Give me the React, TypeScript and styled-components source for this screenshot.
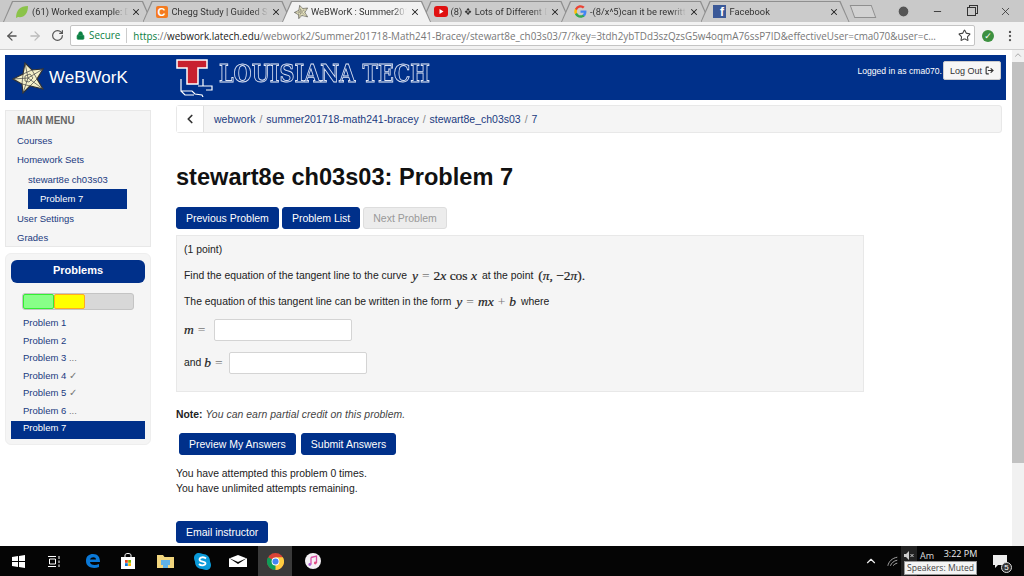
import styled, { createGlobalStyle } from 'styled-components';
import { ArrowLeft, ArrowRight, ChevronLeft, ChevronUp, EllipsisVertical, Lock, LogOut as LogOutIcon, Minus, RotateCw, Star, UserCircle2, X } from 'lucide-react';
import type { ReactNode } from 'react';

const NAVY = '#00308a';
const LINK = '#1a3a80';

const Global = createGlobalStyle`
  html, body { margin: 0; padding: 0; height: 100%; overflow: hidden; }
  body { font-family: "Liberation Sans", Arial, sans-serif; color: #222; background: #fff; }
  * { box-sizing: border-box; }
`;

const StarLogo = ({ size }: { size: number }) => (
  <svg width={size} height={size} viewBox="0 0 32 32">
    <path d="M1 17 L11 12 L13 1 L20 8 L31 7 L25 17 L31 27 L18 24 L11 31 L10 22 Z" fill="#f4f0c8" stroke="#333" strokeWidth="1.2" />
    <path d="M16 16 L1 17 M16 16 L13 1 M16 16 L31 7 M16 16 L31 27 M16 16 L11 31 M11 12 L20 8 L25 17 L18 24 L10 22 Z M13 14 L18 12 L21 16 L17 20 L13 19 Z" fill="none" stroke="#444" strokeWidth="0.7" />
  </svg>
);

const Leaf = () => (
  <svg width="14" height="14" viewBox="0 0 14 14">
    <path d="M1 13 C1 5 5 1 13 1 C13 9 9 13 3 12 Z" fill="#8bc34a" />
  </svg>
);
const Youtube = () => (
  <svg width="14" height="11" viewBox="0 0 14 11">
    <rect width="14" height="11" rx="3" fill="#e01010" />
    <path d="M5.5 3 L9.5 5.5 L5.5 8 Z" fill="#fff" />
  </svg>
);
const GoogleG = () => (
  <svg width="13" height="13" viewBox="0 0 24 24">
    <path d="M23 12.3c0-.8-.1-1.600-.2-2.300H12v4.400h6.200a5.300 5.300 0 0 1-2.300 3.500v2.900h3.700c2.200-2 3.400-5 3.400-8.500z" fill="#4285f4" />
    <path d="M12 23.500c3.100 0 5.700-1 7.600-2.800l-3.700-2.900c-1 .7-2.300 1.100-3.900 1.100-3 0-5.500-2-6.400-4.800H1.800v3A11.500 11.500 0 0 0 12 23.500z" fill="#34a853" />
    <path d="M5.600 14.100a6.900 6.900 0 0 1 0-4.400v-3H1.800a11.500 11.500 0 0 0 0 10.400z" fill="#fbbc05" />
    <path d="M12 4.800c1.700 0 3.200.6 4.400 1.700l3.300-3.300A11.500 11.500 0 0 0 1.800 6.700l3.800 3c.9-2.800 3.400-4.900 6.400-4.900z" fill="#ea4335" />
  </svg>
);

const TabStrip = styled.div`
  height: 22px;
  background: #c9c9c9;
  display: flex;
  align-items: flex-end;
  padding-left: 3px;
`;
const TabShape = styled.div<{ $active?: boolean }>`
  width: 149px;
  height: 21px;
  margin-right: -9.500px;
  flex: none;
  background: #8f8f8f;
  clip-path: polygon(0 100%, 9px 0, calc(100% - 9px) 0, 100% 100%);
  display: flex;
  z-index: ${(p) => (p.$active ? 2 : 1)};
`;
const TabFill = styled.div<{ $active?: boolean }>`
  flex: 1;
  min-width: 0;
  margin-top: 1px;
  background: ${(p) => (p.$active ? '#f2f2f2' : '#cbcbcb')};
  clip-path: polygon(1px 100%, 10px 0, calc(100% - 10px) 0, calc(100% - 1px) 100%);
  display: flex;
  align-items: center;
  padding: 0 11px 1px 12px;
  gap: 3px;
`;
const TabIcon = styled.span`
  width: 14px;
  height: 14px;
  flex: none;
  display: flex;
  align-items: center;
  justify-content: center;
`;
const TabTitle = styled.span`
  flex: 1;
  min-width: 0;
  font: 9.300px "Roboto", sans-serif;
  color: #333;
  white-space: nowrap;
  overflow: hidden;
  -webkit-mask-image: linear-gradient(90deg, #000 85%, transparent 100%);
  mask-image: linear-gradient(90deg, #000 85%, transparent 100%);
`;
const CheggIcon = styled.span`
  width: 12px;
  height: 12px;
  border-radius: 2px;
  background: #f47b20;
  color: #fff;
  font: bold 11px/12px "Liberation Sans", sans-serif;
  text-align: center;
`;
const FbIcon = styled.span`
  width: 13px;
  height: 13px;
  background: #3b5998;
  color: #fff;
  font: bold 12px/15px "Liberation Sans", sans-serif;
  text-align: right;
  padding-right: 2px;
  overflow: hidden;
`;
const NewTab = styled.div`
  width: 22px;
  height: 13px;
  margin: 0 0 4px 12px;
  background: #d2d2d2;
  border: 1px solid #8f8f8f;
  transform: skewX(20deg);
  flex: none;
`;
const WindowControls = styled.div`
  flex: 1;
  align-self: stretch;
  display: flex;
  align-items: center;
  color: #333;
  padding-left: 12px;
`;
const WinButton = styled.span`
  width: 34px;
  display: flex;
  justify-content: center;
`;
const RestoreIcon = styled.span`
  width: 9px;
  height: 9px;
  border: 1px solid #333;
  box-shadow: 2px -2px 0 -1px #c9c9c9, 2px -2px 0 0 #333;
`;

const Toolbar = styled.div`
  height: 28px;
  background: #f2f2f2;
  border-bottom: 1px solid #cfcfcf;
  display: flex;
  align-items: center;
  padding-left: 5px;
`;
const NavIcons = styled.div`
  display: flex;
  align-items: center;
  gap: 9px;
  width: 65px;
  flex: none;
`;
const Omnibox = styled.div`
  width: 905px;
  height: 21px;
  background: #fff;
  border: 1px solid #c4c4c4;
  border-radius: 2px;
  display: flex;
  align-items: center;
  padding-left: 5px;
  font: 9.900px "Open Sans", sans-serif;
  white-space: nowrap;
  overflow: hidden;
`;
const Secure = styled.span`
  display: flex;
  align-items: center;
  gap: 4px;
  color: #0b8043;
  padding-right: 6px;
  margin-right: 6px;
  border-right: 1px solid #ccc;
  line-height: 15px;
`;
const UrlGrey = styled.span`
  color: #777;
`;
const UrlScheme = styled.span`
  color: #0b8043;
`;
const UrlHost = styled.span`
  color: #222;
`;
const OmniStar = styled.span`
  margin-left: auto;
  padding-right: 3px;
  display: flex;
`;
const ToolEnd = styled.div`
  flex: 1;
  display: flex;
  align-items: center;
  padding-left: 7px;
  gap: 9px;
`;
const ExtCheck = styled.span`
  width: 12px;
  height: 12px;
  border-radius: 50%;
  background: #3d9140;
  color: #fff;
  font: bold 9px/12px "DejaVu Sans", sans-serif;
  text-align: center;
`;

const Body = styled.div`
  height: 496px;
  display: flex;
  overflow: hidden;
`;
const Page = styled.div`
  flex: 1;
  min-width: 0;
  padding: 5px 6px 0 5px;
  overflow: hidden;
`;
const Scrollbar = styled.div`
  width: 12px;
  flex: none;
  background: #f1f1f1;
  display: flex;
  flex-direction: column;
  align-items: center;
  color: #999;
`;
const ScrollThumb = styled.div`
  width: 100%;
  height: 401px;
  margin-top: 2px;
  background: #c1c1c1;
`;

const NavBar = styled.div`
  height: 45px;
  background: ${NAVY};
  display: flex;
  align-items: flex-start;
`;
const Brand = styled.div`
  width: 171px;
  height: 100%;
  padding-left: 7px;
  display: flex;
  align-items: center;
  gap: 5px;
  color: #fff;
  font-size: 17px;
  flex: none;
`;
const TechLogo = styled.div`
  display: flex;
  align-items: center;
  height: 100%;
  gap: 1px;
`;
const TechName = styled.span`
  font: bold 25px "DejaVu Serif", serif;
  color: ${NAVY};
  -webkit-text-stroke: 0.9px #dfe6f5;
  white-space: nowrap;
  margin-top: -9px;
  transform: scaleX(0.83);
  transform-origin: left;
`;
const UserArea = styled.div`
  margin-left: auto;
  padding: 6px 5px 0 0;
  display: flex;
  align-items: center;
  color: #fff;
  font-size: 8.600px;
`;
const LogOut = styled.button`
  width: 58px;
  height: 19px;
  margin-left: 1px;
  background: #f6f6f6;
  border: 1px solid #ccc;
  border-radius: 2px;
  font: 9px "Liberation Sans", sans-serif;
  color: #333;
  padding: 0;
  display: flex;
  align-items: center;
  justify-content: center;
  gap: 3px;
`;

const Columns = styled.div`
  display: flex;
  padding-top: 5px;
`;
const SideColumn = styled.div`
  width: 171px;
  flex: none;
  padding-top: 5px;
  display: flex;
  flex-direction: column;
  gap: 6px;
`;
const MenuBox = styled.div`
  width: 146px;
  height: 137px;
  background: #f5f5f5;
  border: 1px solid #e8e8e8;
  padding: 0 0 0 11px;
  font-size: 9.500px;
`;
const MenuRow = styled.div<{ $indent?: boolean; $current?: boolean; $title?: boolean }>`
  height: 19.500px;
  line-height: 19px;
  margin-left: ${(p) => (p.$indent ? '11px' : '0')};
  width: ${(p) => (p.$indent ? '99px' : 'auto')};
  padding-left: ${(p) => (p.$current ? '12px' : '0')};
  background: ${(p) => (p.$current ? NAVY : 'transparent')};
  color: ${(p) => (p.$current ? '#fff' : p.$title ? '#666' : LINK)};
  font-weight: ${(p) => (p.$title ? 'bold' : 'normal')};
  font-size: ${(p) => (p.$title ? '10px' : '9.500px')};
  white-space: nowrap;
`;
const ProblemsBox = styled.div`
  width: 146px;
  height: 192px;
  background: #f5f5f5;
  border: 1px solid #eee;
  border-radius: 6px;
  padding: 6px 5px 0;
`;
const ProblemsHeader = styled.div`
  height: 23px;
  background: ${NAVY};
  border-radius: 6px;
  color: #fff;
  font-weight: bold;
  font-size: 11px;
  line-height: 21px;
  text-align: center;
`;
const Progress = styled.div`
  height: 17px;
  margin: 10px 11px 6px;
  background: #d8d8d8;
  border: 1px solid #c4c4c4;
  border-radius: 3px;
  display: flex;
`;
const ProgressPart = styled.div<{ $fill: string; $edge: string }>`
  height: 100%;
  background: ${(p) => p.$fill};
  border: 1px solid ${(p) => p.$edge};
  border-radius: 2px;
`;
const ProblemRow = styled.div<{ $current?: boolean }>`
  height: 17.500px;
  line-height: 14.500px;
  padding-left: 12px;
  font-size: 9.500px;
  background: ${(p) => (p.$current ? NAVY : 'transparent')};
  color: ${(p) => (p.$current ? '#fff' : LINK)};
`;
const Mark = styled.span`
  color: #777;
`;

const Main = styled.div`
  flex: 1;
  min-width: 0;
  font-size: 10.400px;
  color: #222;
`;
const Crumbs = styled.div`
  height: 28px;
  display: flex;
  background: #f5f5f5;
  border: 1px solid #e8e8e8;
  border-radius: 3px;
  margin-right: 4px;
`;
const BackButton = styled.div`
  width: 27px;
  height: 100%;
  flex: none;
  background: #fff;
  border-right: 1px solid #e0e0e0;
  display: flex;
  align-items: center;
  justify-content: center;
  color: #333;
`;
const CrumbList = styled.div`
  padding: 0 0 0 10px;
  display: flex;
  align-items: center;
  gap: 4px;
  font-size: 10.500px;
  color: ${LINK};
  padding-bottom: 0;
`;
const CrumbSep = styled.span`
  color: #888;
`;
const Title = styled.h1`
  margin: 0;
  height: 74px;
  padding-top: 28px;
  font: bold 23.600px/32px "Liberation Sans", sans-serif;
  color: #111;
`;
const ButtonRow = styled.div`
  display: flex;
  gap: 3px;
`;
const Btn = styled.span<{ $disabled?: boolean }>`
  height: 22px;
  padding: 0 9px;
  display: inline-flex;
  align-items: center;
  font-size: 10.500px;
  border-radius: 3px;
  background: ${(p) => (p.$disabled ? '#ececec' : NAVY)};
  color: ${(p) => (p.$disabled ? '#999' : '#fff')};
  border: 1px solid ${(p) => (p.$disabled ? '#ddd' : NAVY)};
`;
const ProblemPanel = styled.div`
  width: 688px;
  height: 157px;
  margin-top: 6px;
  padding: 5px 7px 0;
  background: #f5f5f5;
  border: 1px solid #e8e8e8;
`;
const ProblemLine = styled.div<{ $gap: number }>`
  height: 17px;
  line-height: 17px;
  margin-bottom: ${(p) => p.$gap}px;
  display: flex;
  align-items: center;
  white-space: pre;
`;
const Eq = styled.span<{ $inline?: boolean }>`
  font: italic 13.500px "Liberation Serif", serif;
  -webkit-text-stroke: 0.2px #222;
  margin: 0 ${(p) => (p.$inline ? '2px' : '0')};
`;
const EqUpright = styled.span`
  font-style: normal;
`;
const EqFaint = styled.span`
  font-style: normal;
  color: #777;
  -webkit-text-stroke: 0;
  padding: 0 4px;
`;
const AnswerInput = styled.span<{ $gap: number }>`
  width: 138px;
  height: 22px;
  margin-left: ${(p) => p.$gap}px;
  background: #fff;
  border: 1px solid #d4d4d4;
  border-radius: 2px;
  display: inline-block;
`;
const Note = styled.div`
  margin-top: 16px;
  height: 13px;
  line-height: 13px;
`;
const NoteBody = styled.em`
  color: #444;
  letter-spacing: 0.05px;
`;
const SubmitRow = styled.div`
  display: flex;
  gap: 5px;
  margin: 12px 0 0 3px;
`;
const Attempts = styled.div`
  margin-top: 11px;
  line-height: 15px;
`;
const EmailWrap = styled.div`
  margin-top: 25px;
`;

const Taskbar = styled.div`
  height: 30px;
  background: #050505;
  display: flex;
  align-items: center;
  position: relative;
`;
const TaskIcon = styled.div<{ $w: number; $active?: boolean }>`
  width: ${(p) => p.$w}px;
  height: 30px;
  flex: none;
  display: flex;
  align-items: center;
  justify-content: center;
  background: ${(p) => (p.$active ? '#3a3a3a' : 'transparent')};
`;
const Tray = styled.div`
  margin-left: auto;
  height: 100%;
  display: flex;
  align-items: center;
  color: #eee;
`;
const WifiCell = styled.span`
  width: 21px;
  display: flex;
  justify-content: flex-end;
`;
const SpeakerCell = styled.span`
  width: 16px;
  height: 100%;
  margin-left: 2px;
  padding-top: 5px;
  background: #222;
  display: flex;
  justify-content: center;
`;
const AmLabel = styled.span`
  width: 20px;
  margin-top: -12px;
  padding-left: 3px;
  font: 9px "Open Sans", sans-serif;
  color: #ddd;
`;
const Clock = styled.div`
  width: 47px;
  margin-top: -15px;
  font: 9px "Open Sans", sans-serif;
  text-align: center;
  color: #eee;
`;
const Notify = styled.div`
  width: 40px;
  padding-left: 9px;
  display: flex;
  position: relative;
`;
const NotifyBadge = styled.span`
  position: absolute;
  left: 17px;
  top: 7px;
  width: 11px;
  height: 11px;
  border-radius: 50%;
  background: #333;
  border: 1px solid #ddd;
  color: #fff;
  font: 8px/9px "Liberation Sans", sans-serif;
  text-align: center;
`;
const Tooltip = styled.div`
  position: absolute;
  left: 904px;
  top: 15px;
  width: 73px;
  height: 14px;
  background: #f4f4f4;
  border: 1px solid #999;
  color: #444;
  font: 8.600px/12px "Open Sans", sans-serif;
  text-align: center;
  white-space: nowrap;
`;

const tabs: { icon: ReactNode; title: string; active?: boolean }[] = [
  { icon: <Leaf />, title: '(61) Worked example: Dividing' },
  { icon: <CheggIcon>C</CheggIcon>, title: 'Chegg Study | Guided Solutions' },
  { icon: <StarLogo size={14} />, title: 'WeBWorK : Summer201718', active: true },
  { icon: <Youtube />, title: '(8) ❖ Lots of Different Denominators' },
  { icon: <GoogleG />, title: '-(8/x^5)can it be rewritten as' },
  { icon: <FbIcon>f</FbIcon>, title: 'Facebook' },
];

const problems: { label: string; mark?: string }[] = [
  { label: 'Problem 1' },
  { label: 'Problem 2' },
  { label: 'Problem 3', mark: ' ...' },
  { label: 'Problem 4', mark: ' ✓' },
  { label: 'Problem 5', mark: ' ✓' },
  { label: 'Problem 6', mark: ' ...' },
];

const App = () => (
  <>
    <Global />
    <TabStrip>
      {tabs.map((tab) => (
        <TabShape key={tab.title} $active={tab.active}>
          <TabFill $active={tab.active}>
            <TabIcon>{tab.icon}</TabIcon>
            <TabTitle>{tab.title}</TabTitle>
            <X size={10} strokeWidth={2.5} color="#222" />
          </TabFill>
        </TabShape>
      ))}
      <NewTab />
      <WindowControls>
        <WinButton><UserCircle2 size={13} fill="#555" color="#c9c9c9" /></WinButton>
        <WinButton><Minus size={11} /></WinButton>
        <WinButton><RestoreIcon /></WinButton>
        <WinButton><X size={13} strokeWidth={1.5} /></WinButton>
      </WindowControls>
    </TabStrip>

    <Toolbar>
      <NavIcons>
        <ArrowLeft size={14} color="#555" strokeWidth={2.2} />
        <ArrowRight size={14} color="#bbb" strokeWidth={2.2} />
        <RotateCw size={13} color="#555" strokeWidth={2.2} />
      </NavIcons>
      <Omnibox>
        <Secure><Lock size={9} fill="#0b8043" strokeWidth={2} />Secure</Secure>
        <UrlScheme>https</UrlScheme>
        <UrlGrey>://</UrlGrey>
        <UrlHost>webwork.latech.edu</UrlHost>
        <UrlGrey>/webwork2/Summer201718-Math241-Bracey/stewart8e_ch03s03/7/?key=3tdh2ybTDd3szQzsG5w4oqmA76ssP7ID&amp;effectiveUser=cma070&amp;user=c...</UrlGrey>
        <OmniStar><Star size={13} color="#444" /></OmniStar>
      </Omnibox>
      <ToolEnd>
        <ExtCheck>✓</ExtCheck>
        <EllipsisVertical size={14} color="#555" />
      </ToolEnd>
    </Toolbar>

    <Body>
      <Page>
        <NavBar>
          <Brand><StarLogo size={32} />WeBWorK</Brand>
          <TechLogo>
            <svg width="42" height="38" viewBox="0 0 42 38">
              <path d="M1 1 H31 V9 H22 V25 H11 V9 H1 Z" fill="#c8202f" stroke="#fff" strokeWidth="1.500" />
              <path d="M5 20 V32 H16 L19 35 L26 36 L27 38 M5 32 L9 36 H18 M27 27 V20 M22 27 H36 V31 H30" fill="none" stroke="#fff" strokeWidth="1.200" />
            </svg>
            <TechName>LOUISIANA TECH</TechName>
          </TechLogo>
          <UserArea>Logged in as cma070.<LogOut>Log Out<LogOutIcon size={9} strokeWidth={3} /></LogOut></UserArea>
        </NavBar>

        <Columns>
          <SideColumn>
            <MenuBox>
              <MenuRow $title>MAIN MENU</MenuRow>
              <MenuRow>Courses</MenuRow>
              <MenuRow>Homework Sets</MenuRow>
              <MenuRow $indent>stewart8e ch03s03</MenuRow>
              <MenuRow $indent $current>Problem 7</MenuRow>
              <MenuRow>User Settings</MenuRow>
              <MenuRow>Grades</MenuRow>
            </MenuBox>
            <ProblemsBox>
              <ProblemsHeader>Problems</ProblemsHeader>
              <Progress>
                <ProgressPart $fill="#88ff88" $edge="#33ee33" style={{ width: '28%' }} />
                <ProgressPart $fill="#ffff00" $edge="#ffaa22" style={{ width: '28%' }} />
              </Progress>
              {problems.map((p) => (
                <ProblemRow key={p.label}>{p.label}<Mark>{p.mark}</Mark></ProblemRow>
              ))}
              <ProblemRow $current>Problem 7</ProblemRow>
            </ProblemsBox>
          </SideColumn>

          <Main>
            <Crumbs>
              <BackButton><ChevronLeft size={14} strokeWidth={3} /></BackButton>
              <CrumbList>
                webwork <CrumbSep>/</CrumbSep> summer201718-math241-bracey <CrumbSep>/</CrumbSep> stewart8e_ch03s03 <CrumbSep>/</CrumbSep> 7
              </CrumbList>
            </Crumbs>
            <Title>stewart8e ch03s03: Problem 7</Title>
            <ButtonRow>
              <Btn>Previous Problem</Btn>
              <Btn>Problem List</Btn>
              <Btn $disabled>Next Problem</Btn>
            </ButtonRow>
            <ProblemPanel>
              <ProblemLine $gap={9}>(1 point)</ProblemLine>
              <ProblemLine $gap={9}>
                {'Find the equation of the tangent line to the curve '}
                <Eq $inline>y<EqFaint>=</EqFaint><EqUpright>2</EqUpright>x <EqUpright>cos</EqUpright> x</Eq>
                {' at the point '}
                <Eq $inline><EqUpright>(</EqUpright>π, <EqUpright>−2</EqUpright>π<EqUpright>).</EqUpright></Eq>
              </ProblemLine>
              <ProblemLine $gap={11}>
                {'The equation of this tangent line can be written in the form '}
                <Eq $inline>y<EqFaint>=</EqFaint>mx<EqFaint>+</EqFaint>b</Eq>
                {' where'}
              </ProblemLine>
              <ProblemLine $gap={16}>
                <Eq>m<EqFaint>=</EqFaint></Eq><AnswerInput $gap={5} />
              </ProblemLine>
              <ProblemLine $gap={0}>
                {'and '}<Eq>b<EqFaint>=</EqFaint></Eq><AnswerInput $gap={2} />
              </ProblemLine>
            </ProblemPanel>
            <Note><b>Note:</b> <NoteBody>You can earn partial credit on this problem.</NoteBody></Note>
            <SubmitRow>
              <Btn>Preview My Answers</Btn>
              <Btn>Submit Answers</Btn>
            </SubmitRow>
            <Attempts>
              You have attempted this problem 0 times.<br />
              You have unlimited attempts remaining.
            </Attempts>
            <EmailWrap><Btn>Email instructor</Btn></EmailWrap>
          </Main>
        </Columns>
      </Page>
      <Scrollbar>
        <ChevronUp size={10} />
        <ScrollThumb />
      </Scrollbar>
    </Body>

    <Taskbar>
      <TaskIcon $w={36}>
        <svg width="13" height="13" viewBox="0 0 13 13" fill="#fff">
          <path d="M0 2 L6 1 V6 H0 Z M7 1 L13 0 V6 H7 Z M0 7 H6 V12 L0 11 Z M7 7 H13 V13 L7 12 Z" />
        </svg>
      </TaskIcon>
      <TaskIcon $w={36}>
        <svg width="13" height="13" viewBox="0 0 13 13" fill="none" stroke="#fff">
          <path d="M0 1.500 H8 M0 11.500 H8 M1.500 4 H7.500 V9 H1.500 Z M11 1 V4 M11 5.500 V8 M11 9.500 V12" />
        </svg>
      </TaskIcon>
      <TaskIcon $w={41}>
        <svg width="16" height="16" viewBox="0 0 16 16">
          <path d="M1 8 C1 3 4 1 8 1 C13 1 15 4 15 9 H5 C5 12 10 13 14 11 V14 C9 16 1 15 1 8 Z M5 6.500 H11 C11 3.500 6 3.500 5 6.500 Z" fill="#0a78d7" fillRule="evenodd" />
        </svg>
      </TaskIcon>
      <TaskIcon $w={29}>
        <svg width="14" height="16" viewBox="0 0 14 16">
          <path d="M4 4 V2 C4 0 10 0 10 2 V4" fill="none" stroke="#fff" />
          <rect y="4" width="14" height="12" fill="#fff" />
          <rect x="4" y="7" width="2.800" height="2.800" fill="#e8471f" />
          <rect x="7.200" y="7" width="2.800" height="2.800" fill="#7fba00" />
          <rect x="4" y="10.200" width="2.800" height="2.800" fill="#0a78d7" />
          <rect x="7.200" y="10.200" width="2.800" height="2.800" fill="#ffb900" />
        </svg>
      </TaskIcon>
      <TaskIcon $w={46}>
        <svg width="17" height="14" viewBox="0 0 17 14">
          <path d="M0 1 H6 L7.500 3 H17 V14 H0 Z" fill="#f2d67e" />
          <rect x="4" y="6" width="9" height="5" fill="#5fb2e8" />
          <rect x="6" y="11" width="5" height="3" fill="#5fb2e8" />
        </svg>
      </TaskIcon>
      <TaskIcon $w={29}>
        <svg width="17" height="17" viewBox="0 0 17 17">
          <path d="M5 0 C7 0 8 1 9 1 C13 1 16 4 16 8 C16 9 17 10 17 12 C17 15 15 17 12 17 C10 17 9 16 8 16 C4 16 1 13 1 9 C1 8 0 7 0 5 C0 2 2 0 5 0 Z" fill="#0a9ad9" />
          <path d="M12 5.500 C10 3.500 5.500 4 5.500 6.500 C5.500 9.500 11.500 8 11.500 10.500 C11.500 12.500 7 13 5 11" fill="none" stroke="#fff" strokeWidth="1.800" />
        </svg>
      </TaskIcon>
      <TaskIcon $w={41}>
        <svg width="18" height="12" viewBox="0 0 18 12">
          <path d="M0 3.500 L9 0 L18 3.500 V12 H0 Z" fill="#fff" />
          <path d="M0 3 L9 7 L18 3 L9 9 Z" fill="#050505" />
        </svg>
      </TaskIcon>
      <TaskIcon $w={34} $active>
        <svg width="17" height="17" viewBox="0 0 24 24">
          <circle cx="12" cy="12" r="12" fill="#db4437" />
          <path d="M12 12 L1.600 6 A12 12 0 0 0 12 24 L18 12 Z" fill="#0f9d58" />
          <path d="M12 6 H22.400 A12 12 0 0 1 12 24 Z" fill="#ffcd40" />
          <circle cx="12" cy="12" r="5.500" fill="#fff" />
          <circle cx="12" cy="12" r="4.300" fill="#4285f4" />
        </svg>
      </TaskIcon>
      <TaskIcon $w={41}>
        <svg width="16" height="16" viewBox="0 0 16 16">
          <circle cx="8" cy="8" r="8" fill="#f4f0f4" />
          <path d="M6 4.500 L11.500 3 V10 M6 4.500 V11.500" fill="none" stroke="#d94fa4" strokeWidth="1.300" />
          <circle cx="4.800" cy="11.500" r="1.400" fill="#b05fd6" />
          <circle cx="10.300" cy="10" r="1.400" fill="#e0507f" />
        </svg>
      </TaskIcon>
      <Tray>
        <ChevronUp size={14} />
        <WifiCell>
          <svg width="12" height="11" viewBox="0 0 14 12" fill="none" stroke="#bbb">
            <path d="M1 11 C2 6 6 2 12 1 M4 11 C5 8 8 5 12 4.500 M7 11 C8 10 10 8 12 8" />
          </svg>
        </WifiCell>
        <SpeakerCell>
          <svg width="10" height="9" viewBox="0 0 10 9" fill="#ccc">
            <path d="M0 3 H2 L5 0 V9 L2 6 H0 Z" />
            <path d="M6.500 3 L9.500 6 M9.500 3 L6.500 6" stroke="#ccc" />
          </svg>
        </SpeakerCell>
        <AmLabel>Am</AmLabel>
        <Clock>3:22 PM</Clock>
        <Notify>
          <svg width="14" height="13" viewBox="0 0 14 13">
            <path d="M0 0 H14 V10 H5 L2 13 V10 H0 Z" fill="#eee" />
          </svg>
          <NotifyBadge>5</NotifyBadge>
        </Notify>
      </Tray>
      <Tooltip>Speakers: Muted</Tooltip>
    </Taskbar>
  </>
);

export default App;
